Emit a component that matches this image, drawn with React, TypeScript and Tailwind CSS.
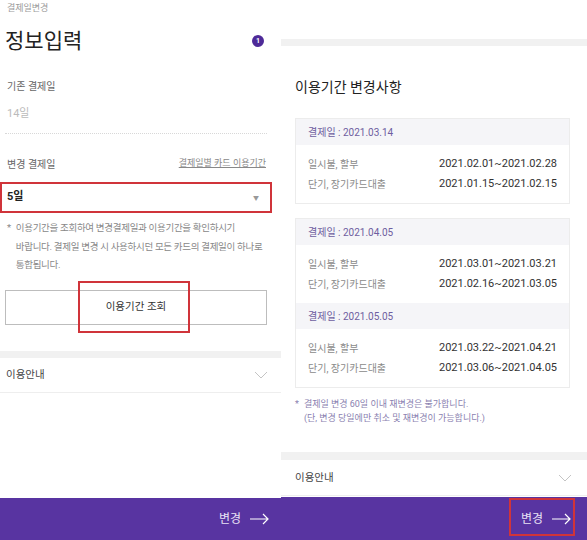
import React from "react";

const font = { fontFamily: 'Roboto, "Noto Sans CJK KR", "Noto Sans", sans-serif' };

function Chevron() {
  return (
    <svg width="14" height="8" viewBox="0 0 14 8" fill="none">
      <path d="M1 1l6 6 6-6" stroke="#c4c4c4" strokeWidth="1" />
    </svg>
  );
}

function Arrow() {
  return (
    <svg width="20" height="12" viewBox="0 0 20 12" fill="none">
      <path d="M0 6h18M13 1l5 5-5 5" stroke="#ffffff" strokeWidth="1.2" />
    </svg>
  );
}

type Row = { label: string; range: string };
type Period = { date: string; rows: Row[] };

const periods: Period[][] = [
  [
    {
      date: "2021.03.14",
      rows: [
        { label: "일시불, 할부", range: "2021.02.01~2021.02.28" },
        { label: "단기, 장기카드대출", range: "2021.01.15~2021.02.15" },
      ],
    },
  ],
  [
    {
      date: "2021.04.05",
      rows: [
        { label: "일시불, 할부", range: "2021.03.01~2021.03.21" },
        { label: "단기, 장기카드대출", range: "2021.02.16~2021.03.05" },
      ],
    },
    {
      date: "2021.05.05",
      rows: [
        { label: "일시불, 할부", range: "2021.03.22~2021.04.21" },
        { label: "단기, 장기카드대출", range: "2021.03.06~2021.04.05" },
      ],
    },
  ],
];

function LeftPanel() {
  return (
    <div className="w-[281px] h-full flex flex-col bg-white">
      <div className="flex-1 flex flex-col">
        <div className="px-[7px] pt-[2px] text-[9px] leading-[12px] text-[#9a9a9a]">결제일변경</div>
        <div className="flex items-center justify-between pl-[5px] pr-[17px] mt-[14px] h-[26px]">
          <span className="text-[21px] leading-[26px] text-[#222]">정보입력</span>
          <span className="w-[12px] h-[12px] rounded-full bg-[#4e2a98] text-white text-[7px] font-bold flex items-center justify-center">1</span>
        </div>
        <div className="px-[7px] mt-[26px] text-[10px] leading-[14px] text-[#666]">기존 결제일</div>
        <div className="px-[7px] mt-[13px] text-[11px] leading-[14px] text-[#bbb]">14일</div>
        <div className="mx-[5px] w-[262px] mt-[12px] border-t border-dotted border-[#d8d8d8]" />
        <div className="flex items-center justify-between pl-[7px] pr-[15px] mt-[23px] h-[14px]">
          <span className="text-[10px] text-[#666]">변경 결제일</span>
          <span className="text-[9px] text-[#888] underline">결제일별 카드 이용기간</span>
        </div>
        <div className="mt-[11px] w-[272px] h-[31px] border-2 border-[#d0343a] flex items-center justify-between pl-[5px] pr-[11px]">
          <span className="text-[11px] font-bold text-[#222]">5일</span>
          <span className="text-[6px] text-[#999]">▼</span>
        </div>
        <div className="mt-[6px] pl-[7px] flex text-[9.5px] leading-[18.5px] text-[#888] whitespace-nowrap tracking-[-0.3px]">
          <span className="mr-[5px]">*</span>
          <span>
            이용기간을 조회하여 변경결제일과 이용기간을 확인하시기
            <br />
            바랍니다. 결제일 변경 시 사용하시던 모든 카드의 결제일이 하나로
            <br />
            통합됩니다.
          </span>
        </div>
        <div className="relative mt-[15px] ml-[5px] w-[262px] h-[35px] border border-[#bdbdbd] flex items-center justify-center text-[10.5px] text-[#333]">
          이용기간 조회
          <div className="absolute left-[72px] top-[-10px] w-[112px] h-[52px] border-2 border-[#d0343a]" />
        </div>
        <div className="mt-[26px] h-[7px] bg-[#f1f1f1]" />
        <div className="h-[35px] flex items-center justify-between pl-[6px] pr-[13px] border-b border-[#eeeeee]">
          <span className="text-[10.5px] text-[#444]">이용안내</span>
          <Chevron />
        </div>
      </div>
      <div className="h-[42px] bg-[#5834a1] flex items-center justify-end pr-[11px] gap-[9px]">
        <span className="text-[12px] text-[#e8e2f4]">변경</span>
        <Arrow />
      </div>
    </div>
  );
}

function RightPanel() {
  return (
    <div className="flex-1 h-full flex flex-col bg-white">
      <div className="flex-1 flex flex-col">
        <div className="mt-[39px] h-[7px] bg-[#f1f1f1]" />
        <div className="pl-[14px] mt-[31px] text-[14px] leading-[20px] text-[#222]">이용기간 변경사항</div>
        <div className="ml-[14px] mr-[17px] mt-[21px] flex flex-col gap-[14px]">
          {periods.map((group, gi) => (
            <div key={gi} className="border border-[#ececec]">
              {group.map((p) => (
                <div key={p.date}>
                  <div className="h-[26px] bg-[#f5f5f8] flex items-center px-[12px] text-[10px] text-[#6e5ea0]">
                    결제일 : {p.date}
                  </div>
                  <div className="py-[9px] px-[12px] flex flex-col">
                    {p.rows.map((r) => (
                      <div key={r.label} className="h-[20px] flex items-center justify-between">
                        <span className="text-[10px] text-[#8a8a8a]">{r.label}</span>
                        <span className="text-[11px] text-[#333]">{r.range}</span>
                      </div>
                    ))}
                  </div>
                </div>
              ))}
            </div>
          ))}
        </div>
        <div className="mt-[9px] pl-[14px] flex text-[9px] leading-[14px] text-[#8a7fb0]">
          <span className="mr-[5px]">*</span>
          <span>
            결제일 변경 60일 이내 재변경은 불가합니다.
            <br />
            (단, 변경 당일에만 취소 및 재변경이 가능합니다.)
          </span>
        </div>
        <div className="mt-[27px] h-[8px] bg-[#f1f1f1]" />
        <div className="h-[36px] flex items-center justify-between pl-[14px] pr-[15px] border-b border-[#eeeeee]">
          <span className="text-[10.5px] text-[#444]">이용안내</span>
          <Chevron />
        </div>
      </div>
      <div className="h-[43px] bg-[#5834a1] flex items-center justify-end pr-[15px]">
        <div className="relative flex items-center gap-[9px]">
          <span className="text-[12px] text-[#e8e2f4]">변경</span>
          <Arrow />
          <div className="absolute left-[-12px] top-[-12px] w-[66px] h-[38px] border-2 border-[#d0343a]" />
        </div>
      </div>
    </div>
  );
}

export default function App() {
  return (
    <div className="w-[587px] h-[540px] flex bg-white overflow-hidden" style={font}>
      <LeftPanel />
      <RightPanel />
    </div>
  );
}
